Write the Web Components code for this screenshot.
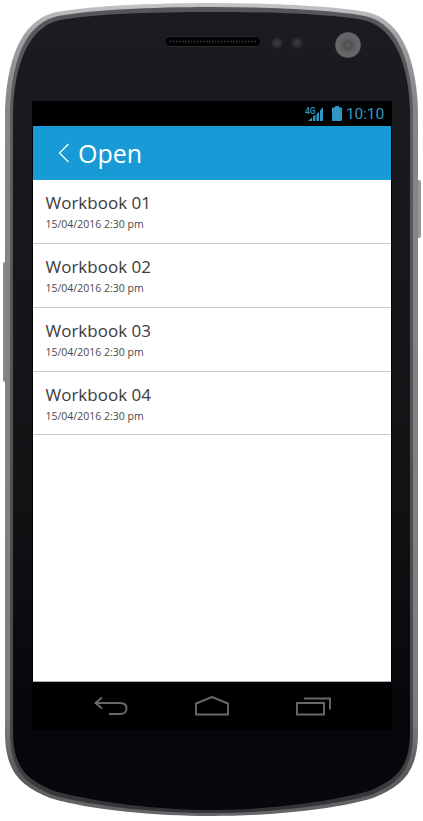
<!DOCTYPE html>
<html>
<head>
<meta charset="utf-8">
<title>Open</title>
<style>
  html, body { margin: 0; padding: 0; background: #fff; }
</style>
</head>
<body>
<phone-frame>
  <status-bar slot="status" time="10:10"></status-bar>
  <app-bar title="Open"></app-bar>
  <workbook-list>
    <workbook-row name="Workbook 01" date="15/04/2016 2:30 pm"></workbook-row>
    <workbook-row name="Workbook 02" date="15/04/2016 2:30 pm"></workbook-row>
    <workbook-row name="Workbook 03" date="15/04/2016 2:30 pm"></workbook-row>
    <workbook-row name="Workbook 04" date="15/04/2016 2:30 pm"></workbook-row>
  </workbook-list>
  <nav-buttons slot="nav"></nav-buttons>
</phone-frame>

<script>
const frameTpl = document.createElement("template");
frameTpl.innerHTML = `
<style>
  :host { display: block; position: relative; width: 423px; height: 821px; overflow: hidden; }
  .body { position: absolute; left: 0; top: 0; }
  .screen {
    position: relative;
    margin: 101px 0 0 32px;
    width: 360px;
    height: 629px;
    display: flex;
    flex-direction: column;
    background: #000;
    border-radius: 2px;
  }
  .content {
    flex: 1;
    margin: 0 1px;
    display: flex;
    flex-direction: column;
    background: #fff;
    min-height: 0;
    border-bottom: 1px solid #a3afbb;
  }
  .wrap { display: flow-root; }
</style>
<svg class="body" width="423" height="821" viewBox="0 0 423 821">
  <defs>
    <linearGradient id="rim" x1="0" y1="0" x2="0" y2="1">
      <stop offset="0" stop-color="#c4c4c6"/>
      <stop offset="0.04" stop-color="#a0a0a3"/>
      <stop offset="0.12" stop-color="#87878a"/>
      <stop offset="0.88" stop-color="#7d7d80"/>
      <stop offset="0.95" stop-color="#5a5a5d"/>
      <stop offset="1" stop-color="#66666a"/>
    </linearGradient>
    <linearGradient id="inner" x1="0" y1="0" x2="0" y2="1">
      <stop offset="0" stop-color="#55555a"/>
      <stop offset="0.12" stop-color="#5d5d60"/>
      <stop offset="0.88" stop-color="#4a4a4d"/>
      <stop offset="1" stop-color="#333336"/>
    </linearGradient>
    <linearGradient id="face" x1="0" y1="0" x2="0" y2="1">
      <stop offset="0" stop-color="#1b1b20"/>
      <stop offset="0.6" stop-color="#131316"/>
      <stop offset="0.88" stop-color="#07070b"/>
      <stop offset="1" stop-color="#08080c"/>
    </linearGradient>
    <radialGradient id="dot">
      <stop offset="0" stop-color="#3b3b3e"/>
      <stop offset="0.45" stop-color="#333336"/>
      <stop offset="1" stop-color="#1c1c20"/>
    </radialGradient>
    <radialGradient id="lens">
      <stop offset="0" stop-color="#5e5e61"/>
      <stop offset="0.3" stop-color="#505053"/>
      <stop offset="0.5" stop-color="#5f5f62"/>
      <stop offset="0.9" stop-color="#68686b"/>
      <stop offset="1" stop-color="#4a4a4d"/>
    </radialGradient>
  </defs>
  <rect x="3" y="262" width="5" height="120" rx="2" fill="#8a8a8d"/>
  <rect x="415" y="180" width="6" height="58" rx="2" fill="#98989b"/>
  <path d="M211.5 3 C150 3 90 6 56 12 C28 18 7 48 5 110 L5 735 C6 772 20 786 50 798 C90 810 155 816 211.5 816 C268 816 333 810 373 798 C403 786 417 772 418 735 L418 110 C416 48 395 18 367 12 C333 6 273 3 211.5 3 Z" fill="url(#rim)"/>
  <path d="M211.5 7 C150 7 91 10 58 16 C31 22 12 50 10 110 L10 735 C11 770 24 783 52 795 C92 806 155 813 211.5 813 C268 813 331 806 371 795 C399 783 412 770 413 735 L413 110 C411 50 392 22 365 16 C332 10 273 7 211.5 7 Z" fill="url(#inner)"/>
  <path d="M211.5 12 C150 12 93 14 60 20 C35 25 15 53 13 110 L13 735 C14 768 27 780 54 791 C94 802 156 810 211.5 810 C267 810 329 802 369 791 C396 780 409 768 410 735 L410 110 C408 53 388 25 363 20 C330 14 273 12 211.5 12 Z" fill="url(#face)"/>
  <rect x="165" y="36.5" width="96" height="10" rx="5" fill="#020203" stroke="#2a2a2e" stroke-width="1"/>
  <line x1="170" y1="41.5" x2="256" y2="41.5" stroke="#303034" stroke-width="2" stroke-dasharray="1.5 1.5"/>
  <circle cx="277" cy="43" r="6.5" fill="url(#dot)"/>
  <circle cx="297" cy="43" r="6.5" fill="url(#dot)"/>
  <circle cx="348" cy="45" r="13" fill="url(#lens)"/>
</svg>
<div class="wrap">
  <div class="screen">
    <slot name="status"></slot>
    <div class="content"><slot></slot></div>
    <slot name="nav"></slot>
  </div>
</div>
`;

class PhoneFrame extends HTMLElement {
  constructor() {
    super();
    this.attachShadow({ mode: "open" });
    this.shadowRoot.appendChild(frameTpl.content.cloneNode(true));
  }
}

class StatusBar extends HTMLElement {
  constructor() {
    super();
    this.attachShadow({ mode: "open" });
    this.shadowRoot.innerHTML = `
    <style>
      :host {
        display: flex;
        align-items: center;
        justify-content: flex-end;
        height: 25px;
        flex: none;
        padding-right: 8px;
        color: #2f97c2;
        font: 400 15.5px Roboto, sans-serif;
        letter-spacing: -0.1px;
      }
      svg { display: block; }
      .signal { margin-right: 8px; }
      .battery { margin-right: 4px; }
    </style>
    <svg class="signal" width="19" height="16" viewBox="0 0 19 16">
      <text x="0" y="7.5" font-family="Roboto" font-size="8.5" font-weight="500" fill="#2f97c2">4G</text>
      <path d="M3 15 L7 15 L7 11.5 Z M8 15 L10.5 15 L10.5 8.5 L8 10.5 Z M11.5 15 L14 15 L14 6 L11.5 8 Z M15 15 L18 15 L18 1 L15 4.5 Z" fill="#2f97c2"/>
    </svg>
    <svg class="battery" width="10" height="15" viewBox="0 0 10 15">
      <path d="M3 0 H7 V1.5 H9 Q10 1.5 10 2.5 V14 Q10 15 9 15 H1 Q0 15 0 14 V2.5 Q0 1.5 1 1.5 H3 Z" fill="#2f97c2"/>
    </svg>
    <span></span>`;
    this.shadowRoot.querySelector("span").textContent = this.getAttribute("time");
  }
}

class AppBar extends HTMLElement {
  constructor() {
    super();
    this.attachShadow({ mode: "open" });
    this.shadowRoot.innerHTML = `
    <style>
      :host {
        display: flex;
        align-items: center;
        flex: none;
        height: 54px;
        background: #189ad6;
        color: #fff;
        padding-left: 25px;
        gap: 8px;
        box-sizing: border-box;
        font: 25px "Open Sans", sans-serif;
      }
      svg { display: block; }
    </style>
    <svg width="12" height="20" viewBox="0 0 12 20">
      <path d="M10.5 1 L1.5 10 L10.5 19" fill="none" stroke="#fff" stroke-width="1.2"/>
    </svg>
    <span></span>`;
    this.shadowRoot.querySelector("span").textContent = this.getAttribute("title");
  }
}

class WorkbookList extends HTMLElement {
  constructor() {
    super();
    this.attachShadow({ mode: "open" });
    this.shadowRoot.innerHTML = `
    <style>
      :host { display: block; flex: 1; }
    </style>
    <slot></slot>`;
  }
}

class WorkbookRow extends HTMLElement {
  constructor() {
    super();
    this.attachShadow({ mode: "open" });
    this.shadowRoot.innerHTML = `
    <style>
      :host {
        display: block;
        box-sizing: border-box;
        height: 64px;
        padding: 11px 0 0 12.5px;
        border-bottom: 1px solid #c8c8c8;
        font-family: "Open Sans", sans-serif;
        color: #3b3b3b;
      }
      :host(:last-child) { height: 63px; }
      .name { font-size: 17px; line-height: 23px; }
      .date { font-size: 10.5px; line-height: 14px; color: #4a4a4a; margin-top: 3px; }
    </style>
    <div class="name"></div>
    <div class="date"></div>`;
    this.shadowRoot.querySelector(".name").textContent = this.getAttribute("name");
    this.shadowRoot.querySelector(".date").textContent = this.getAttribute("date");
  }
}

class NavButtons extends HTMLElement {
  constructor() {
    super();
    this.attachShadow({ mode: "open" });
    this.shadowRoot.innerHTML = `
    <style>
      :host {
        display: flex;
        flex: none;
        height: 48px;
        align-items: center;
        justify-content: space-between;
        padding: 0 61px 0 62px;
      }
      svg { display: block; fill: none; stroke: #686868; stroke-width: 1.9; }
    </style>
    <svg width="34" height="20" viewBox="0 0 34 20">
      <path d="M8 1.5 L1.5 7 L8 12.5 M1.5 7 H26 Q32.5 7 32.5 12.5 Q32.5 18 26 18 H15"/>
    </svg>
    <svg width="34" height="20" viewBox="0 0 34 20">
      <path d="M17 1 L33 7.5 V18.5 H1 V7.5 Z"/>
    </svg>
    <svg width="35" height="20" viewBox="0 0 35 20">
      <path d="M1 7 H28 V18.5 H1 Z M8 2.5 H34 V13.5"/>
    </svg>`;
  }
}

customElements.define("phone-frame", PhoneFrame);
customElements.define("status-bar", StatusBar);
customElements.define("app-bar", AppBar);
customElements.define("workbook-list", WorkbookList);
customElements.define("workbook-row", WorkbookRow);
customElements.define("nav-buttons", NavButtons);
</script>
</body>
</html>
